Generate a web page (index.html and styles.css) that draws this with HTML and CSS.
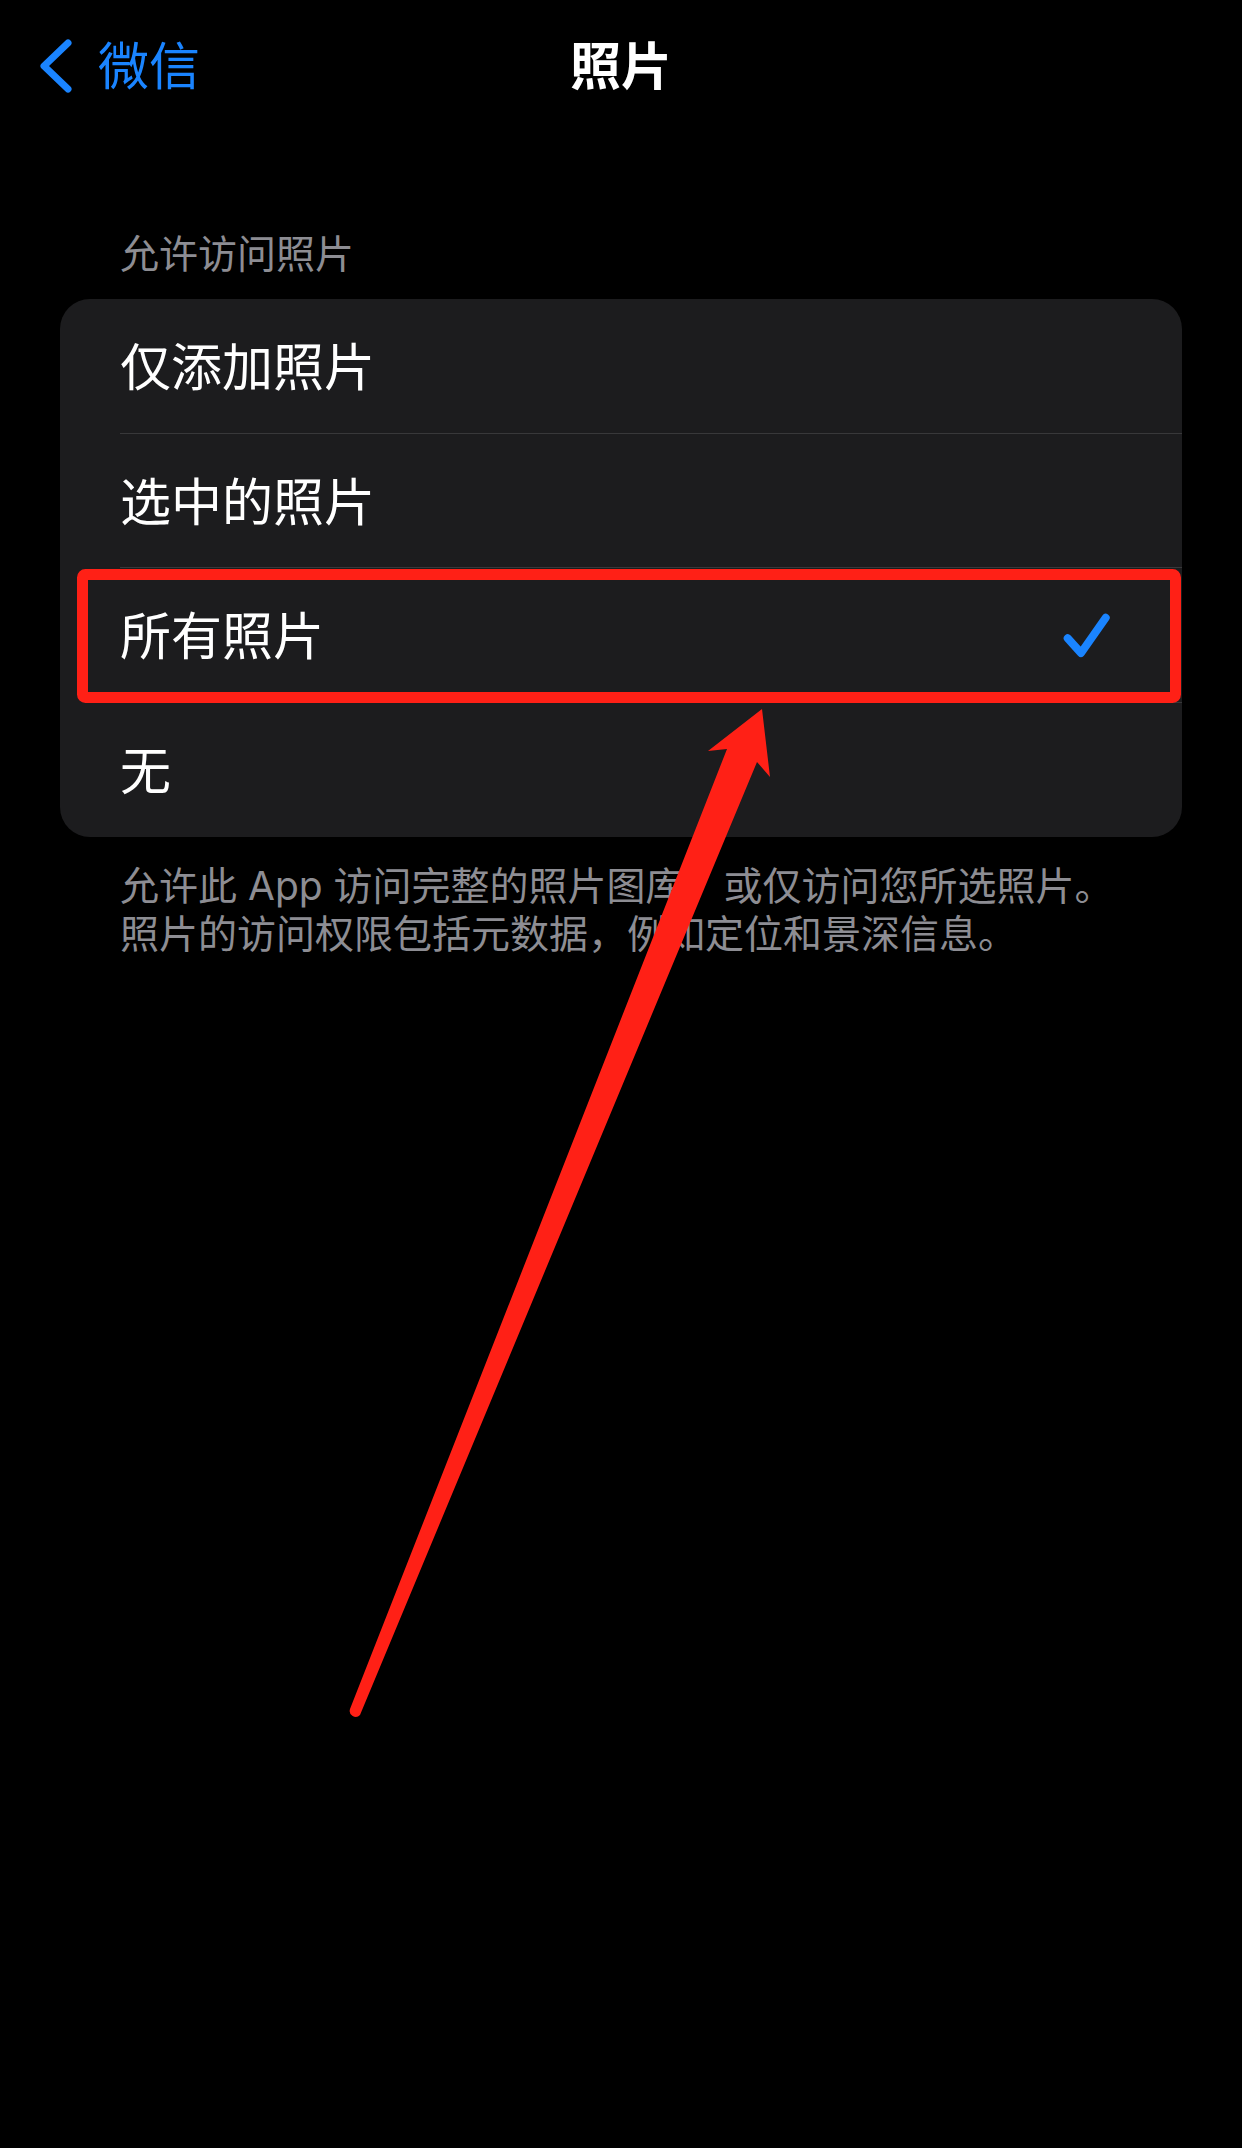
FILE: index.html
```html
<!DOCTYPE html>
<html lang="zh-CN">
<head>
<meta charset="utf-8">
<title>照片</title>
<link rel="stylesheet" href="styles.css">
</head>
<body>
<div class="screen">
  <header class="nav">
    <div class="nav-back">
      <svg class="chev" viewBox="0 0 36 56" aria-hidden="true"><path d="M32 5 L8 28 L32 51" /></svg>
      <span class="back-label">微信</span>
    </div>
    <h1 class="nav-title">照片</h1>
    <div class="nav-spacer"></div>
  </header>

  <div class="section-header">允许访问照片</div>

  <ul class="list">
    <li class="row"><div class="row-body"><span class="row-label">仅添加照片</span></div></li>
    <li class="row"><div class="row-body"><span class="row-label">选中的照片</span></div></li>
    <li class="row"><div class="row-body"><span class="row-label">所有照片</span>
      <svg class="check" viewBox="0 0 48 48" aria-hidden="true"><path d="M5.7 27.3 L19 42 L43.7 6.7" /></svg></div></li>
    <li class="row"><div class="row-body"><span class="row-label">无</span></div></li>
  </ul>

  <p class="footer">允许此 App 访问完整的照片图库，或仅访问您所选照片。<br>照片的访问权限包括元数据，例如定位和景深信息。</p>

  <svg class="annotation" viewBox="0 0 1242 2148" aria-hidden="true">
    <rect class="mark-box" x="82.5" y="574.5" width="1093" height="123" rx="3" />
    <path class="mark-arrow" d="M762 709 L770 777 L757 762 L360 1715 A6 6 0 0 1 350 1709 L727 749 L708 751 Z" />
  </svg>
</div>
</body>
</html>
```

FILE: styles.css
```css
html, body {
  margin: 0;
  padding: 0;
  background: #000;
}

body {
  font-family: "Inter", "Noto Sans CJK SC", sans-serif;
  -webkit-font-smoothing: antialiased;
}

.screen {
  position: relative;
  width: 1242px;
  height: 2148px;
  overflow: hidden;
  background: #000;
}

/* Navigation bar */
.nav {
  display: grid;
  grid-template-columns: 1fr auto 1fr;
  align-items: center;
  height: 126px;
  padding-top: 3px;
}

.nav-back {
  display: flex;
  align-items: center;
  gap: 26px;
  padding-left: 36px;
  color: #1a84ff;
}

.chev {
  display: block;
  width: 36px;
  height: 56px;
  fill: none;
  stroke: #1a84ff;
  stroke-width: 7;
  stroke-linecap: round;
  stroke-linejoin: round;
}

.back-label {
  font-size: 51px;
  line-height: 1;
}

.nav-title {
  margin: 0;
  font-size: 51px;
  line-height: 1;
  font-weight: 600;
  color: #fff;
}

/* Section header */
.section-header {
  margin: 101px 0 21px;
  padding-left: 120px;
  height: 48px;
  font-size: 39px;
  line-height: 48px;
  color: #8d8d93;
}

/* Grouped list */
.list {
  list-style: none;
  margin: 0 60px;
  padding: 0;
  background: #1c1c1e;
  border-radius: 30px;
  overflow: hidden;
}

.row {
  padding-left: 60px;
}

.row-body {
  display: flex;
  align-items: center;
  justify-content: space-between;
  height: 134.5px;
  box-sizing: border-box;
  padding-right: 72px;
  border-bottom: 1px solid #38383a;
}

.row:last-child .row-body {
  border-bottom: none;
}

.row-label {
  font-size: 51px;
  line-height: 1;
  color: #fff;
  padding-top: 4px;
}

.check {
  display: block;
  width: 48px;
  height: 48px;
  fill: none;
  stroke: #1a84ff;
  stroke-width: 8;
  stroke-linecap: round;
  stroke-linejoin: round;
}

/* Footer */
.footer {
  margin: 25px 0 0;
  padding: 0 60px 0 120px;
  font-size: 39px;
  line-height: 48px;
  color: #8d8d93;
}

/* Annotation overlay */
.annotation {
  position: absolute;
  left: 0;
  top: 0;
  width: 1242px;
  height: 2148px;
  pointer-events: none;
}

.mark-box {
  fill: none;
  stroke: #ff2016;
  stroke-width: 11;
}

.mark-arrow {
  fill: #ff2016;
}
```
